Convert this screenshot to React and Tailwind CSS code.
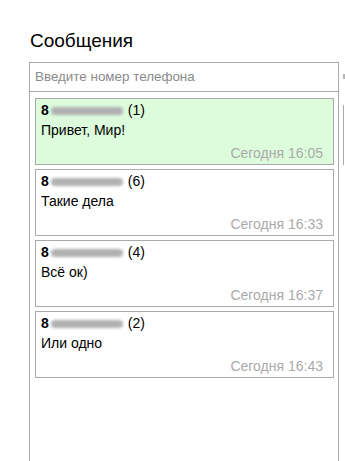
import React from 'react';

const messages = [
  { id: 1, count: 1, text: 'Привет, Мир!', time: 'Сегодня 16:05', unread: true },
  { id: 2, count: 6, text: 'Такие дела', time: 'Сегодня 16:33', unread: false },
  { id: 3, count: 4, text: 'Всё ок)', time: 'Сегодня 16:37', unread: false },
  { id: 4, count: 2, text: 'Или одно', time: 'Сегодня 16:43', unread: false },
];

function MessageCard({ msg }) {
  return (
    <div
      className={`border border-[#aaaaaa] pt-[3px] pb-[2px] pl-[5px] pr-[10px] ${
        msg.unread ? 'bg-[#dcfcdc]' : 'bg-white'
      }`}
    >
      <div className="flex items-center h-[17px] leading-[17px]">
        <span className="font-bold text-black">8</span>
        {/* blurred phone number */}
        <span className="inline-block h-[8px] w-[72px] ml-[2px] bg-[#b0b0b0] blur-[1.5px] rounded-sm" />
        <span className="ml-[5px] text-black">({msg.count})</span>
      </div>
      <div className="mt-[3px] h-[17px] leading-[17px] text-black">{msg.text}</div>
      <div className="mt-[6px] h-[17px] leading-[17px] text-right text-[#aaaaaa]">{msg.time}</div>
    </div>
  );
}

export default function App() {
  return (
    <div
      className="h-[461px] w-[345px] overflow-hidden bg-white text-[14px]"
      style={{ fontFamily: '"Liberation Sans", Arial, sans-serif' }}
    >
      <h1 className="ml-[30px] mt-[30px] h-[22px] leading-[22px] text-[19px] text-black">Сообщения</h1>

      <div className="flex mt-[10px] ml-[29px]">
        {/* Conversations panel */}
        <div className="w-[310px] shrink-0 h-[420px] border border-[#aaaaaa] flex flex-col">
          <div className="h-[29px] border-b border-[#aaaaaa] flex items-center px-[5px]">
            <span className="text-[13.4px] text-[#8a8a8a]">Введите номер телефона</span>
          </div>
          <div className="flex flex-col gap-[4px] pt-[6px] pl-[5px] pr-[4px]">
            {messages.map(m => (
              <MessageCard key={m.id} msg={m} />
            ))}
          </div>
        </div>

        {/* Next column, cut off by the window */}
        <div className="ml-[4px] shrink-0 w-[40px] flex flex-col">
          <div className="h-[29px] flex items-center">
            <span className="block w-[2px] h-[5px] bg-[#b5b5b5]" />
          </div>
          <div className="mt-[14px] h-[60px] border-l border-[#aaaaaa]" />
        </div>
      </div>
    </div>
  );
}
